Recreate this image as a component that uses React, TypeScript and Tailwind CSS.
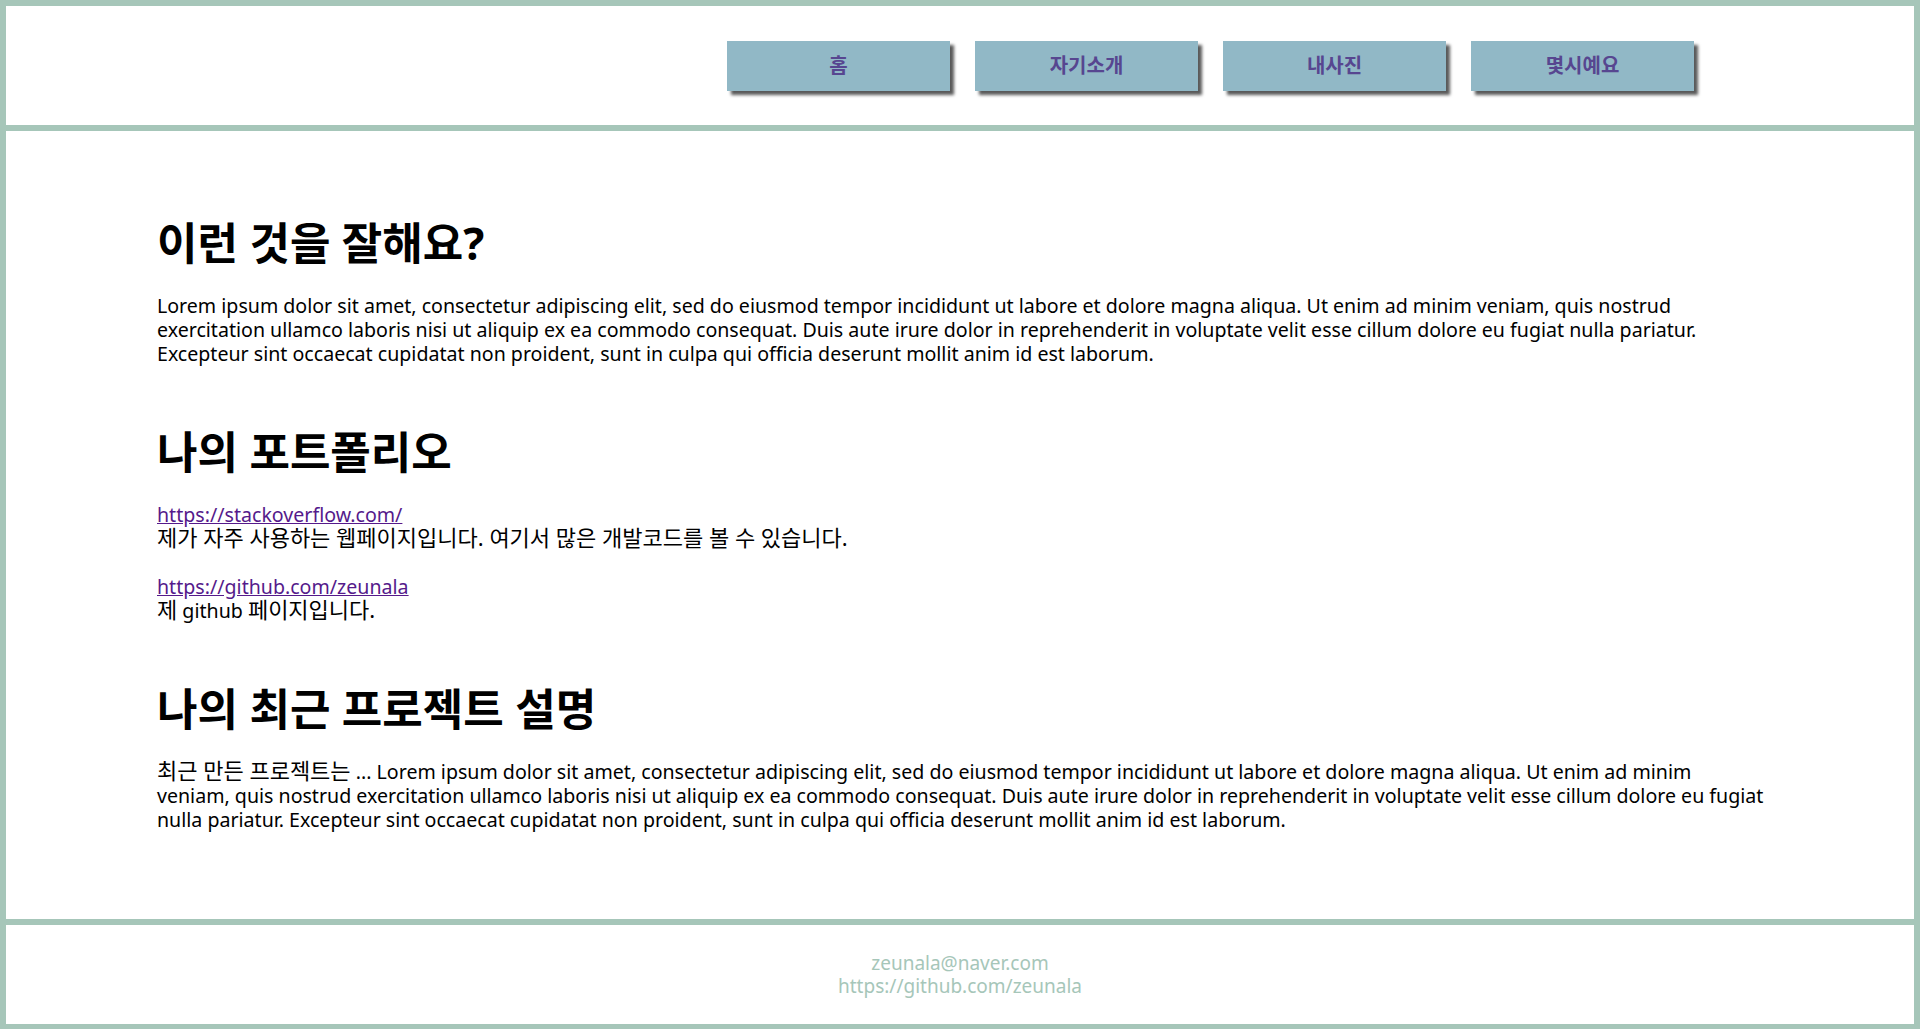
const menus = ["홈", "자기소개", "내사진", "몇시예요"];

const lorem =
  "Lorem ipsum dolor sit amet, consectetur adipiscing elit, sed do eiusmod tempor incididunt ut labore et dolore magna aliqua. Ut enim ad minim veniam, quis nostrud exercitation ullamco laboris nisi ut aliquip ex ea commodo consequat. Duis aute irure dolor in reprehenderit in voluptate velit esse cillum dolore eu fugiat nulla pariatur. Excepteur sint occaecat cupidatat non proident, sunt in culpa qui officia deserunt mollit anim id est laborum.";

// Hangul runs render larger than the latin text next to them
function Ko({ children }: { children: React.ReactNode }) {
  return <span className="text-[22px] leading-[20px]">{children}</span>;
}

export default function App() {
  return (
    <div className="min-h-screen bg-white border-[6px] border-b-[5px] border-[#a6c6b9] font-['Noto_Sans','Noto_Sans_CJK_KR',sans-serif] text-black">
      <header className="h-[119px] flex items-center justify-end gap-[25px] pr-[220px]">
        {menus.map((m) => (
          <a
            key={m}
            href="#"
            className="w-[223px] h-[50px] flex items-center justify-center bg-[#91b8c6] text-[#574690] text-[20px] font-bold shadow-[4px_4px_3px_#5a5a5a]"
          >
            {m}
          </a>
        ))}
      </header>

      <main className="border-y-[6px] border-[#a6c6b9] pl-[151px] pr-[147px] pt-[88px] pb-[87px] text-[19.6px] leading-[24px]">
        <section>
          <h2 className="text-[44px] leading-[48px] font-bold">이런 것을 잘해요?</h2>
          <p className="mt-[27px]">{lorem}</p>
        </section>

        <section className="mt-[62px]">
          <h2 className="text-[44px] leading-[48px] font-bold">나의 포트폴리오</h2>
          <p className="mt-[27px]">
            <a href="#" className="text-[#551a8b] underline">https://stackoverflow.com/</a>
            <br />
            <Ko>제가 자주 사용하는 웹페이지입니다. 여기서 많은 개발코드를 볼 수 있습니다.</Ko>
            <br />
            <br />
            <a href="#" className="text-[#551a8b] underline">https://github.com/zeunala</a>
            <br />
            <Ko>제</Ko> github <Ko>페이지입니다.</Ko>
          </p>
        </section>

        <section className="mt-[62px]">
          <h2 className="text-[44px] leading-[48px] font-bold">나의 최근 프로젝트 설명</h2>
          <p className="mt-[27px]">
            <Ko>최근 만든 프로젝트는</Ko> ... {lorem}
          </p>
        </section>
      </main>

      <footer className="h-[99px] flex flex-col items-center justify-center text-[19px] leading-[23px] text-[#a6c6b9]">
        <div>zeunala@naver.com</div>
        <div>https://github.com/zeunala</div>
      </footer>
    </div>
  );
}
